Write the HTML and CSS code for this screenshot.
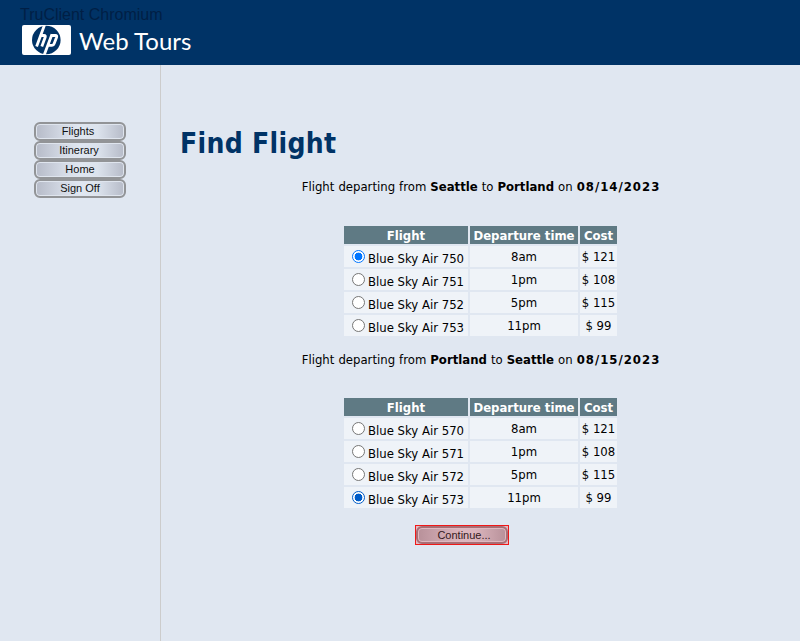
FILE: index.html
```html
<!DOCTYPE html>
<html lang="en">
<head>
<meta charset="utf-8">
<title>Web Tours</title>
<link rel="stylesheet" href="styles.css">
</head>
<body>
<header class="banner">
  <svg class="logo" width="49" height="30" viewBox="0 0 49 30" aria-label="hp">
    <rect width="49" height="30" rx="2" fill="#fff"/>
    <circle cx="24.3" cy="15" r="14.3" fill="#036"/>
    <g fill="none" stroke="#fff" stroke-width="2.8">
      <path d="M22.5 0L14.6 21.5M18.7 10.5h3.4q1.7 0 1 2L19.8 21.5"/>
      <path d="M30 9.3L22.2 30M29.3 10.5h4.2q1.7 0 1 2l-2.3 6q-.6 1.8-2.2 1.8h-4"/>
    </g>
  </svg>
  <span class="brand">Web Tours</span>
  <span class="overlay">TruClient Chromium</span>
</header>
<div class="page">
  <nav class="menu">
    <button class="btn">Flights</button>
    <button class="btn wide">Itinerary</button>
    <button class="btn near">Home</button>
    <button class="btn near">Sign Off</button>
  </nav>
  <main class="content">
    <h1>Find Flight</h1>
    <p class="route"><span>Flight departing from <b>Seattle</b> to <b>Portland</b> on <b class="date">08/14/2023</b></span></p>
    <div class="flights">
      <div class="th">Flight</div><div class="th">Departure time</div><div class="th">Cost</div>
      <label class="td name"><i class="radio on"></i>Blue Sky Air 750</label><div class="td">8am</div><div class="td">$ 121</div>
      <label class="td name"><i class="radio"></i>Blue Sky Air 751</label><div class="td">1pm</div><div class="td">$ 108</div>
      <label class="td name"><i class="radio"></i>Blue Sky Air 752</label><div class="td">5pm</div><div class="td">$ 115</div>
      <label class="td name"><i class="radio"></i>Blue Sky Air 753</label><div class="td">11pm</div><div class="td">$ 99</div>
    </div>
    <p class="route second"><span>Flight departing from <b>Portland</b> to <b>Seattle</b> on <b class="date">08/15/2023</b></span></p>
    <div class="flights">
      <div class="th">Flight</div><div class="th">Departure time</div><div class="th">Cost</div>
      <label class="td name"><i class="radio"></i>Blue Sky Air 570</label><div class="td">8am</div><div class="td">$ 121</div>
      <label class="td name"><i class="radio"></i>Blue Sky Air 571</label><div class="td">1pm</div><div class="td">$ 108</div>
      <label class="td name"><i class="radio"></i>Blue Sky Air 572</label><div class="td">5pm</div><div class="td">$ 115</div>
      <label class="td name"><i class="radio on dark"></i>Blue Sky Air 573</label><div class="td">11pm</div><div class="td">$ 99</div>
    </div>
    <div class="highlight"><button class="btn">Continue...</button></div>
  </main>
</div>
</body>
</html>
```
FILE: styles.css
```css
* { box-sizing: border-box; }
body {
  margin: 0;
  height: 641px;
  overflow: hidden;
  background: #e0e7f1;
  color: #000;
  font: 13px/16px "DejaVu Sans Condensed", "Noto Sans", sans-serif;
}
.banner {
  position: relative;
  display: flex;
  height: 65px;
  padding: 25px 0 0 22px;
  background: #036;
}
.logo { display: block; }
.brand {
  margin-left: 8px;
  color: #fff;
  font: 24px/32px Lato, sans-serif;
  white-space: nowrap;
}
.overlay {
  position: absolute;
  left: 20px;
  top: 5px;
  color: #001f45;
  font: 16px/19px "Liberation Sans", sans-serif;
}
.page { display: flex; height: 576px; }
.menu {
  width: 161px;
  padding: 57px 0 0 34px;
  border-right: 1px solid #ccc;
  flex: none;
}
.btn {
  display: block;
  width: 92px;
  height: 19px;
  margin: 0;
  padding: 0 4px 1px 0;
  border: 2px solid #929497;
  border-radius: 6px;
  background: linear-gradient(90deg, #b6bbc8, #d3d9e4 30%, #e0e7f1 50%, #dce3ed 70%, #b6bbc8);
  box-shadow: inset 0 0 0 1px #dfe5ee;
  color: #111;
  font: 11px/14px "Liberation Sans", sans-serif;
}
.btn.wide { padding-right: 2px; }
.btn.near { padding-right: 0; }
.content { width: 639px; padding-top: 61px; }
h1 {
  margin: 0 0 0 19px;
  height: 36px;
  color: #036;
  font: bold 28px/36px "DejaVu Sans Condensed", "Noto Sans", sans-serif;
  letter-spacing: 0.3px;
}
.route {
  display: flex;
  justify-content: center;
  height: 16px;
  margin: 17px 0 31px;
  word-spacing: 0.3px;
  white-space: nowrap;
}
.route.second { margin: 16px 0 30px; }
.date { letter-spacing: 1px; margin-right: -1px; }
.flights {
  display: grid;
  grid-template-columns: 124px 108px 37px;
  grid-template-rows: 18px repeat(4, 21px);
  gap: 2px;
  width: 273px;
  margin-left: 183px;
}
.th {
  background: #5f7a84;
  color: #fff;
  font-weight: bold;
  line-height: 19px;
  text-align: center;
  white-space: nowrap;
}
.td {
  background: #eff3f8;
  line-height: 22px;
  text-align: center;
  white-space: nowrap;
}
.name {
  display: flex;
  padding-left: 8px;
  line-height: 25px;
  overflow: hidden;
}
.radio {
  width: 13px;
  height: 13px;
  margin: 4px 3px 0 0;
  border: 1px solid #767676;
  border-radius: 50%;
  background: #fff;
  flex: none;
}
.radio.on {
  border-color: #0075ff;
  background: radial-gradient(circle, #0075ff 3.6px, #fff 4.2px);
}
.radio.dark {
  border-color: #005cc8;
  background: radial-gradient(circle, #005cc8 3.6px, #fff 4.2px);
}
.highlight {
  width: 94px;
  height: 20px;
  margin: 17px 0 0 254px;
  border: 1px solid #f01818;
  background: #e3b9c1;
}
.highlight .btn {
  height: 18px;
  padding: 0 0 0 4px;
  border-color: #a96e75;
  background: linear-gradient(90deg, #b8919a, #ddb7bf 50%, #dab4bc 65%, #b8919a);
  box-shadow: inset 0 0 0 1px #e0b8c0;
  color: #331820;
}
```
